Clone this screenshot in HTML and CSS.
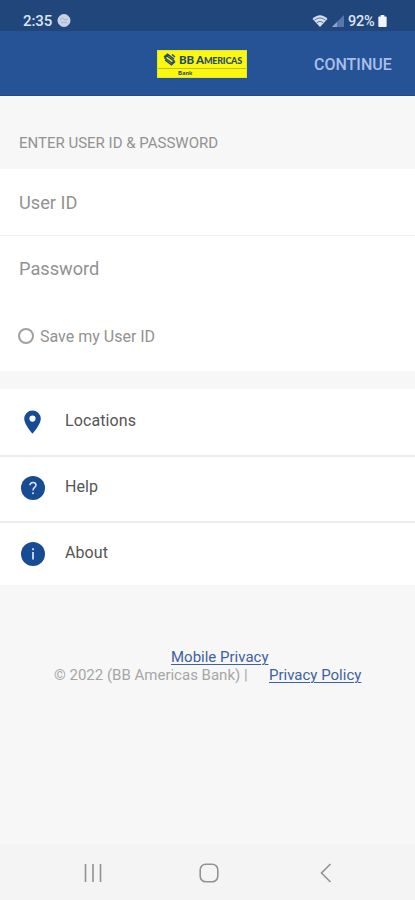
FILE: index.html
```html
<!DOCTYPE html>
<html lang="en">
<head>
<meta charset="utf-8">
<title>BB Americas Bank</title>
<link rel="stylesheet" href="styles.css">
</head>
<body>
<div class="status">
  <span class="time">2:35</span>
  <svg class="blob" width="14" height="13" viewBox="0 0 14 13"><path d="M4 .7Q7-.5 10 .7L12.4 3Q14.5 6.5 12.4 10L10 12.3Q7 13.5 4 12.3L1.6 10Q-.5 6.5 1.6 3Z" fill="#c9d2e4"/><path d="M3 6l3-2 2 2 3-1M4 9l3-1 3 1" stroke="#a5b3cd" fill="none"/></svg>
  <span class="grow"></span>
  <svg class="wifi" width="16" height="12" viewBox="0 0 16 12"><path d="M.5 4Q8-3.5 15.500 4L8 12Z" fill="#d9e1ef"/><path d="M2.300 5.300Q8 .6 13.700 5.300M4.700 7.500Q8 5 11.300 7.500" stroke="#50719f" stroke-width="1" fill="none"/></svg>
  <svg class="signal" width="12" height="12" viewBox="0 0 12 12"><path d="M0 12L12 0V12Z" fill="#5577ab"/><path d="M0 12L5 7V12Z" fill="#8fa6c9"/></svg>
  <span class="percent">92%</span>
  <svg class="battery" width="9" height="12" viewBox="0 0 9 13"><path d="M2.500 0h4v1.500H8q1 0 1 1V12q0 1-1 1H1q-1 0-1-1V2.500q0-1 1-1h1.500z" fill="#f1f5fb"/></svg>
</div>
<header class="header">
  <div class="logo">
    <div class="logo-top">
      <svg width="13" height="13" viewBox="0 0 13 13" fill="none" stroke="#244c70" stroke-width="1.500"><path d="M1 4L4.500 1.200 11 6M5 1.500L2 5l7 5M12 8.500L8.500 11.800 2 7M8 11.500L11 8 4 3M9 1.500l3 2.500"/></svg>
      <span class="brand">BB A<small>MERICAS</small></span>
    </div>
    <div class="logo-bottom">Bank</div>
  </div>
  <span class="continue">CONTINUE</span>
</header>
<main>
  <h1 class="title"><span>ENTER USER ID &amp; PASSWORD</span></h1>
  <section class="form">
    <div class="field line"><span class="userid">User ID</span></div>
    <div class="field"><span class="password">Password</span></div>
    <div class="save"><i class="radio"></i><span>Save my User ID</span></div>
  </section>
  <nav class="menu">
    <div class="item"><svg width="26" height="26" viewBox="0 0 26 26"><path fill="#174b94" fill-rule="evenodd" d="M12.500 1.500a8.300 8.300 0 0 0-8.300 8.300c0 5.700 8.300 15 8.300 15s8.300-9.300 8.300-15a8.300 8.300 0 0 0-8.300-8.300zm0 5a3.100 3.100 0 1 1 0 6.200 3.100 3.100 0 0 1 0-6.200z"/></svg><span class="locations">Locations</span></div>
    <div class="item"><svg width="26" height="26" viewBox="0 0 26 26"><circle cx="13" cy="13" r="12" fill="#174b94"/><path d="M10 10.200Q10 7.400 13 7.400Q16 7.400 16 10Q16 11.300 14.400 12.600Q13 13.800 13 15.500" fill="none" stroke="#dce6f5" stroke-width="1.500"/><circle cx="13" cy="18.200" r="1" fill="#dce6f5"/></svg><span class="help">Help</span></div>
    <div class="item"><svg width="26" height="26" viewBox="0 0 26 26"><circle cx="13" cy="13" r="12" fill="#174b94"/><path d="M13 11v7.500M13 7.200v2" fill="none" stroke="#dce6f5" stroke-width="1.700"/></svg><span class="about">About</span></div>
  </nav>
  <footer class="footer">
    <div class="privacy"><a>Mobile Privacy</a></div>
    <div class="copy"><span class="bank">© 2022 (BB Americas Bank) |</span><a>Privacy Policy</a></div>
  </footer>
</main>
<div class="system">
  <svg width="18" height="18" viewBox="0 0 18 18"><path d="M1.500 0v18M9 0v18M16.500 0v18" stroke="#929292" stroke-width="1.600"/></svg>
  <svg class="home" width="20" height="20" viewBox="0 0 20 20"><rect x="1.200" y="1.200" width="17.600" height="17.600" rx="5.500" fill="none" stroke="#929292" stroke-width="1.600"/></svg>
  <svg class="back" width="12" height="20" viewBox="0 0 12 20"><path d="M10.500 1L1.500 10l9 9" fill="none" stroke="#929292" stroke-width="1.600"/></svg>
</div>
</body>
</html>
```
FILE: styles.css
```css
* { box-sizing: border-box; }
body {
  margin: 0;
  width: 415px;
  height: 900px;
  display: flex;
  flex-direction: column;
  background: #f7f7f7;
  font-family: Roboto, sans-serif;
  color: #929292;
  overflow: hidden;
}
svg { display: block; flex: none; }
span, a { white-space: nowrap; }
.status {
  height: 31px;
  flex: none;
  display: flex;
  align-items: center;
  padding: 10px 28px 0 23px;
  background: #20467c;
  color: #dde5f2;
  font-size: 15px;
  font-weight: 500;
}
.time { width: 34px; letter-spacing: -.1px; }
.grow { flex: 1; }
.wifi { margin-right: 1px; }
.signal { margin: 0 4px 0 3px; }
.percent { width: 28px; margin-top: 1px; font-size: 14.500px; letter-spacing: -.2px; }
.battery { margin: 1px 0 0 2px; }
.header {
  height: 65px;
  flex: none;
  display: flex;
  align-items: center;
  padding: 2px 0 0 157px;
  background: #265396;
  border-bottom: 1px solid #1d4b8b;
}
.logo {
  width: 90px;
  height: 28px;
  border: 1px solid #dfe638;
  background: #fbf70d;
  color: #244c70;
}
.logo-top {
  height: 18px;
  display: flex;
  align-items: center;
  padding-left: 5px;
  gap: 3px;
  border-bottom: 1px solid #c3bd1c;
}
.brand { font: 900 11.500px/17px Lato, sans-serif; letter-spacing: -.2px; }
.brand small { font-size: 9px; }
.logo-bottom { padding-left: 20px; font: 900 6px/8px Lato, sans-serif; letter-spacing: .2px; }
.continue { margin: 1px 0 0 67px; font-size: 16px; font-weight: 500; color: #a9bfe8; }
.title {
  height: 73px;
  margin: 0;
  padding: 38px 0 0 19px;
  font-size: 15px;
  line-height: 18px;
  font-weight: 400;
}
.form { height: 202px; background: #fff; }
.field {
  height: 66px;
  padding: 20px 0 0 19px;
  font-size: 18.200px;
  line-height: 25px;
}
.line { height: 67px; padding-top: 21px; border-bottom: 1px solid #efefef; }
.save { display: flex; align-items: center; height: 69px; padding-left: 18px; font-size: 16px; }
.radio { width: 16px; height: 16px; margin: -1px 6px 0 0; border: 2px solid #a0a0a0; border-radius: 50%; }
.menu { height: 196px; margin-top: 18px; background: #fff; }
.item {
  height: 66px;
  display: flex;
  align-items: center;
  padding: 0 0 1px 20px;
  font-size: 16px;
  letter-spacing: .1px;
  color: #555;
}
.item + .item { padding-bottom: 2px; border-top: 2px solid #ededed; }
.item span { margin: -3px 0 0 19px; }
.footer { padding-top: 63px; font-size: 15px; line-height: 18px; color: #a6a6a6; }
.footer a { color: #3c62a1; text-decoration: underline; text-underline-offset: 2px; text-decoration-thickness: 1px; }
.privacy { padding-left: 171px; }
.copy { display: flex; padding-left: 54px; }
.bank { width: 215px; }
.system {
  height: 56px;
  flex: none;
  margin-top: auto;
  display: flex;
  align-items: center;
  padding: 2px 0 0 84px;
  background: #f4f4f4;
}
.home { margin-left: 97px; }
.back { margin-left: 101px; }
```
